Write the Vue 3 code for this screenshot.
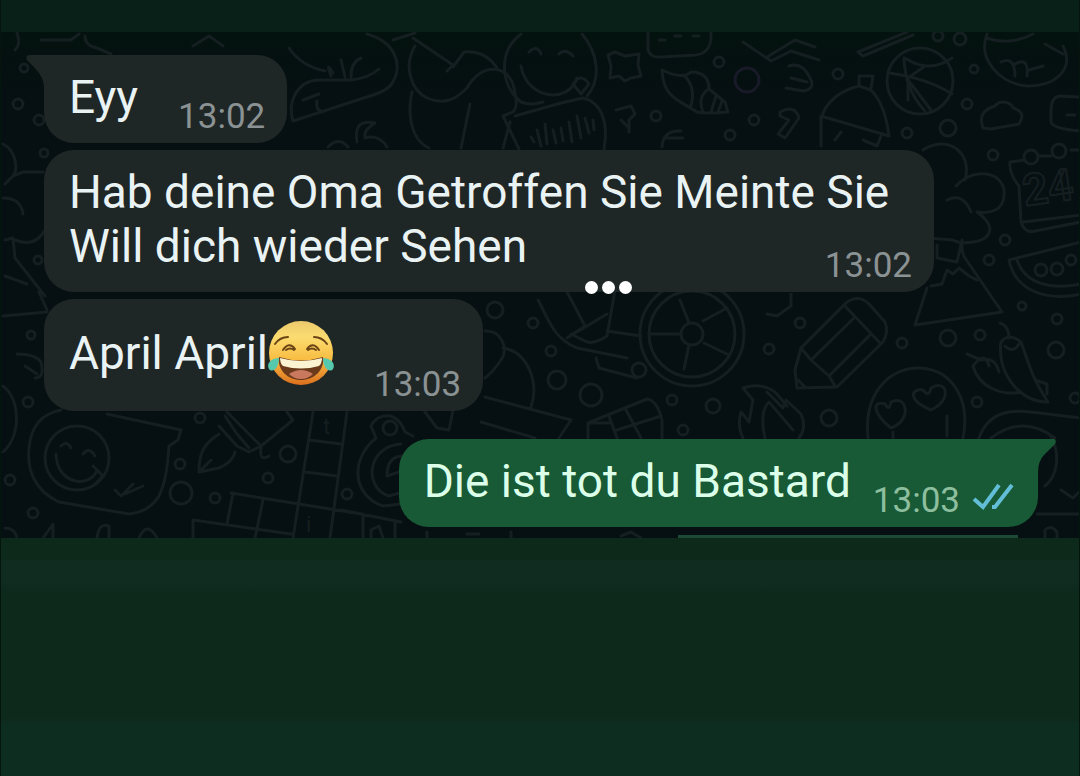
<script setup>
const dots = [
  [23, 68, 4], [17, 104, 5], [43, 153, 4], [38, 120, 5], [37, 260, 4],
  [718, 62, 5], [655, 116, 5], [753, 120, 5], [729, 135, 5], [837, 74, 5],
  [973, 69, 4], [966, 104, 5], [906, 133, 5], [947, 128, 8], [992, 155, 5],
  [1004, 240, 5], [988, 260, 5], [1021, 306, 4], [494, 310, 8], [532, 323, 5],
  [550, 351, 5], [556, 380, 9], [590, 395, 11], [671, 400, 5], [712, 406, 7],
  [682, 430, 5], [768, 349, 5], [799, 323, 5], [901, 343, 5], [947, 338, 8],
  [979, 335, 5], [1056, 319, 5], [1055, 350, 8], [976, 402, 5], [828, 418, 8],
  [1074, 398, 5], [30, 335, 4], [27, 402, 5], [9, 480, 5], [32, 513, 5],
  [199, 418, 5], [179, 464, 5], [180, 493, 11], [214, 498, 5], [267, 478, 5],
  [287, 454, 8], [346, 494, 5], [937, 36, 5], [959, 39, 6]
]

const doodles = [
  // shoe, scarf and apple along the top
  'M288 48Q300 66 324 71M332 73Q324 60 330 76M340 60L344 77M350 77Q350 62 360 58M316 80H350Q368 78 378 69',
  'M366 34C394 42 402 64 392 82Q388 90 372 95L292 121C286 102 296 82 316 80',
  'M302 100L318 94M316 101Q314 110 322 112',
  'M327 147Q338 136 347 147M356 142Q352 118 374 123Q362 130 364 138M364 138Q378 134 386 147',
  'M392 40L414 33M412 38L452 65L446 71M452 67L463 52Q484 50 496 68',
  'M414 46C402 66 410 90 426 98C444 106 456 98 466 88C480 62 508 64 513 88Q518 106 512 112M411 92C406 114 410 140 428 148M469 104L460 148M512 112L502 116L518 149M509 122L502 148',
  // smiling face with note
  'M520 34C496 52 500 86 520 102Q530 106 542 102M581 34C598 54 600 80 586 96M528 52Q536 44 540 54M558 54Q564 48 572 56M520 66C526 100 568 104 576 78',
  'M572 84Q580 72 588 84L580 94Z',
  'M514 116L560 103L582 98C600 102 608 122 603 149M530 137L533 142M536 130L540 146M544 124L546 144M552 130L555 143M560 128L562 141M568 122L571 142M576 116L580 138M584 118L588 133M592 120L593 130',
  // star, robot, shell
  'M614 52L624 56L638 54L637 65L640 76L630 78L624 81L618 76L609 78L610 66L607 55Z',
  'M647 33V45Q646 58 660 57L695 55Q709 53 710 38V32M658 40H664M674 36H680M692 36H698',
  'M661 70Q682 80 690 72Q708 72 708 89L724 102L727 112Q706 114 696 112C678 100 662 98 661 70ZM684 76Q696 90 689 108M708 89Q696 96 702 112M715 96L710 112M721 101L717 112',
  'M742 42L770 61L790 51L818 60M766 57L794 40L814 47M788 66Q801 62 808 76Q816 89 802 91L785 88M790 78L806 82',
  'M615 110L630 106L634 114L628 120V132M620 120L628 128M661 147Q662 130 680 131M663 138H682',
  'M779 112Q794 104 798 118L784 138L777 134L788 120L779 116Z',
  // tent, ball
  'M857 52L906 32M857 52L862 56L912 35',
  'M820 120C824 100 842 90 858 86L870 90Q884 104 888 136L820 116V146M858 86L858 76L872 76L870 88M840 132L834 140M862 140L876 146L880 136',
  'M903 58Q904 90 924 111M904 58Q928 74 951 58M888 73Q926 78 951 94M907 80L930 110M907 100V78L924 66',
  // avocado, cloud, camera
  'M986 34C976 60 1000 84 1026 86C1054 86 1074 70 1062 46M985 38Q1010 46 1032 34M1000 62Q1014 56 1014 76M1014 64Q1028 56 1026 76M1028 70L1042 66M1044 44L1062 54',
  'M982 128C976 112 988 108 994 106C1000 98 1012 104 1012 108Q1026 112 1018 124L990 129Z',
  'M1080 97L1058 96Q1050 98 1050 110V122Q1052 129 1080 131M1066 115H1074',
  // tree and mountain beside the second bubble
  'M922 150C946 134 972 152 964 180M955 186C976 164 1006 174 1003 196C1002 210 990 214 976 212C998 228 988 240 972 242Q958 244 952 240L926 238M946 200Q962 192 970 212',
  'M936 245V258L956 262L961 240Q960 252 964 258L1001 312L914 325L926 288M930 286L941 284L946 270L952 274L958 268L968 276L976 280',
  // calendar
  'M1024 160L1009 162Q1008 174 1018 186L1020 222Q1024 234 1034 231L1080 222M1022 222L1080 215M1038 156H1050M1070 150H1080',
  // melon slice
  'M1008 260L1080 242M1008 260C1014 290 1044 302 1080 294M1016 260C1024 284 1050 290 1080 284',
  // left margin
  'M2 144C14 150 18 168 12 176L4 184M12 176L22 172H42M2 198Q20 198 22 214M14 240Q34 248 44 230M4 240L12 238L14 258L44 296M4 276L26 284M38 292L46 310M2 316L46 312M16 354Q34 354 40 362Q44 378 34 378M24 366L36 374',
  'M2 386C20 400 20 436 2 452M16 33Q20 44 14 50M40 40H70L78 34M84 36Q84 46 96 48L110 54M192 46L208 36L222 46',
  // skate and wheel
  'M537 300C548 320 552 338 576 348L626 358M565 290L584 326L566 338M614 290L606 336Q594 344 586 342L570 334M606 314L576 332M606 331L640 336M595 358L598 368L636 378',
  'M679 300L688 323M650 334H680M702 321L726 308M703 343L726 354M688 345L683 369',
  // hat and chocolate
  'M484 331C500 330 508 348 500 360Q492 372 484 378M502 348C528 352 538 384 530 407M484 397L570 420L562 432L558 438M480 422L534 438',
  'M587 438V423L646 399Q656 400 661 420V438M608 416L616 438M624 408L640 438M616 430L660 416M587 423H608',
  // flames
  'M742 388Q760 382 774 392L786 406M742 388L752 400L748 422L740 412Q736 426 742 438M764 438Q758 412 768 402L792 430',
  'M766 392L782 408L785 400L800 414Q806 428 798 438',
  // pencil
  'M796 388L794 370L800 348L846 302Q858 294 868 304L884 322Q888 332 882 342L836 387ZM844 306L880 344M853 318L810 360L828 376L870 334M800 348L810 360M828 376L834 386M797 380L804 387',
  'M766 314L776 316L790 306V294',
  // heart eyes
  'M867 438C862 390 892 366 920 368C950 370 970 398 962 438M890 428C870 412 872 400 884 404Q888 412 890 402C906 394 912 420 890 428ZM930 410C906 400 910 388 922 390Q928 398 930 388C946 378 952 400 930 410ZM946 416V436M892 432V438',
  // chillies
  'M999 323Q1008 326 1008 338M1000 342Q1008 332 1020 342C1028 364 1030 376 1047 402C1016 402 996 370 1000 342ZM966 354L980 360Q994 356 998 372M972 366C978 388 1002 396 1020 392M972 366Q984 350 988 366M1004 346Q1012 354 1018 344M1034 380L1046 384V394',
  'M978 438C988 410 1012 410 1030 412L1080 418M990 438Q1022 414 1054 438M1050 436C1060 456 1056 476 1044 486M1060 490L1072 498L1080 490M1036 514H1080M1044 538V530Q1050 524 1056 532V538',
  // sticker with smiley
  'M106 414L180 430L177 440L168 446Q166 480 158 496Q148 512 128 514L58 502C32 490 26 468 28 448C30 426 40 414 60 410M60 446Q66 440 70 448M82 454Q88 446 94 456M55 454C56 486 90 488 96 470M92 466L102 476L94 484M114 490L120 496L132 484M124 494L142 486',
  // pen nib
  'M218 426L236 446L248 452L260 446L292 420L286 412M224 416L236 434L248 448M226 412L258 444M218 434C202 444 198 454 198 472L218 468Q232 462 234 452M198 472L210 460M260 448Q258 462 268 456',
  // crossword
  'M312 412L292 538M346 412L329 538M308 440L340 444M304 472L336 476M230 493L360 514M226 524L232 493M262 500L254 538M192 520L290 534M192 538V520',
  // camera
  'M375 438L370 426Q376 414 390 416Q400 420 404 432L412 436M375 438C348 460 352 496 382 506L400 504M400 444C366 446 362 488 388 496L402 492M402 456Q386 456 386 476L398 472M424 412L436 428L448 430L452 410M340 510L400 522M362 514V538M394 522V538M370 538V530L378 526L382 538',
  'M4 528Q14 528 16 538M42 538L52 524V538M96 538Q98 522 108 526V538M138 538Q146 520 156 538M426 538V532M466 534H478M510 538V532M620 536L630 532L640 538'
]

const messages = [
  { text: 'Eyy', time: '13:02', kind: 'first' },
  { text: 'Hab deine Oma Getroffen Sie Meinte Sie Will dich wieder Sehen', time: '13:02', kind: 'long', more: true },
  { text: 'April April', time: '13:03', kind: 'laugh', emoji: true },
  { text: 'Die ist tot du Bastard', time: '13:03', kind: 'sent' }
]
</script>

<template>
  <div class="screen">
    <main class="chat">
      <svg class="wallpaper" viewBox="0 32 1080 506" preserveAspectRatio="xMinYMin slice" aria-hidden="true">
        <path v-for="(d, i) in doodles" :key="'p' + i" :d="d" />
        <circle v-for="(c, i) in dots" :key="'c' + i" :cx="c[0]" :cy="c[1]" :r="c[2]" />
        <circle cx="746" cy="80" r="12" class="violet" />
        <circle cx="919" cy="81" r="33" />
        <circle cx="691" cy="334" r="52" />
        <circle cx="691" cy="334" r="43" />
        <circle cx="691" cy="334" r="11" />
        <circle cx="76" cy="458" r="32" />
        <circle cx="1030" cy="157" r="7" />
        <circle cx="1058" cy="151" r="7" />
        <circle cx="1040" cy="270" r="6" />
        <circle cx="1056" cy="269" r="6" />
        <circle cx="1070" cy="260" r="5" />
        <circle cx="638" cy="370" r="7" />
        <circle cx="389" cy="428" r="7" />
        <text x="1024" y="206" class="day" transform="rotate(-8 1024 206)">24</text>
        <text x="322" y="434" class="letter">t</text>
        <text x="305" y="532" class="letter">i</text>
      </svg>

      <article v-for="m in messages" :key="m.text" class="bubble" :class="m.kind">
        <svg v-if="m.kind === 'first'" class="tail tail-left" viewBox="0 0 46 34" aria-hidden="true">
          <path d="M4 0H46V34H18C18 22 13 17 1 5Q-1 0 4 0Z" />
        </svg>
        <svg v-if="m.kind === 'sent'" class="tail tail-right" viewBox="0 0 46 34" aria-hidden="true">
          <path d="M0 0H44Q47 1 45 5L34 16Q28 22 28 34H0Z" />
        </svg>
        <p class="text">
          <span>{{ m.text }}</span>
          <svg v-if="m.emoji" class="emoji" viewBox="0 0 66 66" role="img" aria-label="😂">
            <defs>
              <linearGradient id="face" x1="0" y1="0" x2="0" y2="1">
                <stop offset="0" stop-color="#ecc96c" />
                <stop offset=".25" stop-color="#fbdc70" />
                <stop offset=".6" stop-color="#f8bd42" />
                <stop offset="1" stop-color="#dc6f1e" />
              </linearGradient>
            </defs>
            <circle cx="33" cy="33" r="32" fill="url(#face)" />
            <g fill="none" stroke="#6b4415" stroke-linecap="round">
              <path d="M7 24Q12 17 20 17M46 17Q54 17 59 24" stroke-width="2" />
              <path d="M15 30Q21 21 27 29M18 30Q22 27 26 30M39 29Q45 21 51 30M40 30Q44 27 48 30" stroke-width="2" />
            </g>
            <path d="M11 37Q33 44 55 37C57 50 46 60 33 60S9 50 11 37Z" fill="#6b3a1a" />
            <path d="M21 54Q33 46 45 54Q40 59 33 59T21 54Z" fill="#c9795e" />
            <path d="M12 38Q33 44 54 38Q54 43 51 46Q33 51 15 46Q12 43 12 38Z" fill="#fbf3d2" />
            <path d="M11 38C3 38-2 44 1 49C4 53 11 49 11 38ZM55 38C63 38 68 44 65 49C62 53 55 49 55 38Z" fill="#55c8ae" />
          </svg>
        </p>
        <div class="meta">
          <time>{{ m.time }}</time>
          <svg v-if="m.kind === 'sent'" class="ticks" viewBox="0 0 42 28" role="img" aria-label="Gelesen">
            <path d="M2 16L11 24L27 2M20 24H23L40 2" />
          </svg>
        </div>
        <div v-if="m.more" class="more" aria-hidden="true"><i></i><i></i><i></i></div>
      </article>
      <div class="next"></div>
    </main>
  </div>
</template>

<style>
body {
  background: #0c291d;
}
</style>

<style scoped>
.screen {
  box-sizing: border-box;
  min-height: 100vh;
  padding-top: 32px;
  border: solid #04150e;
  border-width: 0 1px;
  background: linear-gradient(#092019 0 32px, #0c2919 32px 560px, #102b1f 560px 584px, #0c291c 592px 718px, #0e2d21 724px);
  font-family: Roboto, "Liberation Sans", sans-serif;
}

.chat {
  position: relative;
  display: flex;
  flex-direction: column;
  align-items: flex-start;
  gap: 7px;
  padding: 23px 41px 0 43px;
  overflow: hidden;
  background: linear-gradient(#03120f, #060f11 60px);
}

.wallpaper {
  position: absolute;
  inset: 0;
  width: 100%;
  height: 100%;
  fill: none;
  stroke: #151e20;
  stroke-width: 3;
  stroke-linecap: round;
  stroke-linejoin: round;
}

.violet {
  stroke: #181a28;
}

.day {
  font-size: 44px;
  font-weight: 700;
  stroke-width: 2;
}

.letter {
  font-size: 22px;
  fill: #151e20;
  stroke: none;
}

.bubble {
  position: relative;
  box-sizing: border-box;
  display: flex;
  gap: 40px;
  max-width: 890px;
  padding: 15px 22px 8px 25px;
  border-radius: 30px;
  background: #1f2626;
  color: #eaf3f3;
}

.first {
  border-top-left-radius: 0;
}

.long {
  display: grid;
}

.long > .text,
.long > .meta {
  grid-area: 1 / 1;
}

.long > .meta {
  justify-self: end;
}

.sent {
  align-self: flex-end;
  gap: 22px;
  margin-top: 21px;
  padding-right: 24px;
  border-top-right-radius: 0;
  background: #185936;
  color: #dcffe9;
}

.text {
  position: relative;
  margin: 0;
  padding-bottom: 11px;
  font-size: 46px;
  line-height: 54px;
}

.laugh .text {
  display: flex;
  align-items: center;
  min-height: 78px;
}

.emoji {
  width: 66px;
  height: 66px;
}

.meta {
  position: relative;
  display: flex;
  align-items: flex-start;
  align-self: flex-end;
  gap: 12px;
  color: #8b9293;
  font-size: 35px;
  line-height: 36px;
}

.sent .meta {
  color: #8dbf9f;
}

.ticks {
  width: 42px;
  height: 28px;
  fill: none;
  stroke: #62bdd6;
  stroke-width: 4;
}

.tail {
  position: absolute;
  top: 0;
  width: 46px;
  height: 34px;
  fill: #1f2626;
}

.tail-left {
  left: -18px;
}

.tail-right {
  right: -18px;
  fill: #185936;
}

.more {
  position: absolute;
  bottom: -2px;
  left: 541px;
  display: flex;
  gap: 4px;
}

.more i {
  width: 13px;
  height: 13px;
  border-radius: 50%;
  background: #fff;
}

.next {
  position: relative;
  align-self: flex-end;
  width: 340px;
  height: 3px;
  margin: 1px 20px 0 0;
  background: #1d4a35;
}
</style>
